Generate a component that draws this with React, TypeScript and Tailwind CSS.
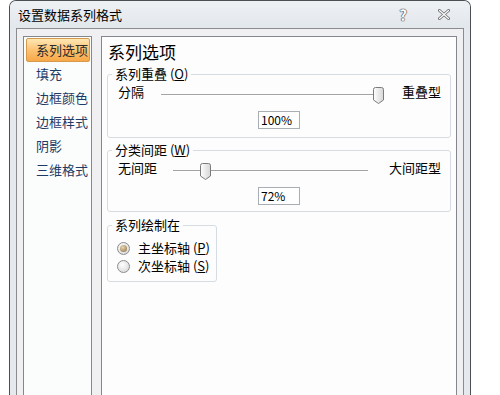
import React from "react";

const font = { fontFamily: '"Noto Sans CJK SC", "Liberation Sans", sans-serif' };

const menuItems = ["系列选项", "填充", "边框颜色", "边框样式", "阴影", "三维格式"];

function Thumb() {
  return (
    <svg width="11" height="17" viewBox="0 0 11 17">
      <defs>
        <linearGradient id="thumbFill" x1="0" y1="0" x2="1" y2="0">
          <stop offset="0" stopColor="#ffffff" />
          <stop offset="1" stopColor="#d6d6d6" />
        </linearGradient>
      </defs>
      <path
        d="M0.5 2.5 Q0.5 0.5 2.5 0.5 H8.5 Q10.5 0.5 10.5 2.5 V13 L5.5 16.5 L0.5 13 Z"
        fill="url(#thumbFill)"
        stroke="#7b7b7b"
      />
    </svg>
  );
}

function Slider({ width, thumbLeft }: { width: number; thumbLeft: number }) {
  return (
    <div className="relative mt-[3px] h-[17px] shrink-0" style={{ width }}>
      <div className="absolute left-0 right-[4px] top-[7px] h-[2px] border-t border-[#a3a3a3] border-b border-b-white" />
      <div className="absolute top-0" style={{ left: thumbLeft }}>
        <Thumb />
      </div>
    </div>
  );
}

function Radio({ checked }: { checked?: boolean }) {
  return (
    <span className="flex h-[13px] w-[13px] items-center justify-center rounded-full border border-[#8c8c8c] bg-[radial-gradient(circle_at_40%_35%,#ffffff,#d2d2d2)]">
      {checked && (
        <span className="h-[7px] w-[7px] rounded-full bg-[radial-gradient(circle_at_40%_35%,#e8d8b4,#8a6a3c)]" />
      )}
    </span>
  );
}

function Group({ title, className, children }: { title: React.ReactNode; className?: string; children: React.ReactNode }) {
  return (
    <fieldset className={`rounded-[3px] border border-[#d5dde3] px-0 ${className ?? ""}`}>
      <legend className="ml-[4px] px-[3px] text-[13px] leading-[16px] text-black">{title}</legend>
      {children}
    </fieldset>
  );
}

export default function App() {
  return (
    <div className="h-[395px] w-[500px] overflow-hidden bg-white" style={font}>
      <div className="ml-[9px] flex h-[400px] w-[462px] flex-col rounded-t-[7px] border border-b-0 border-[#4b4f54] bg-[#e5e9ed]">
        {/* title bar */}
        <div className="flex h-[27px] shrink-0 items-center rounded-t-[6px] bg-gradient-to-b from-[#eef1f4] to-[#e2e7ec] pl-[8px]">
          <span className="text-[13px] text-black">设置数据系列格式</span>
          <span className="ml-auto w-[14px] text-center text-[15px] font-bold leading-none text-white [text-shadow:0_0_1px_#333,0_0_1px_#333,0_0_1px_#333]">
            ?
          </span>
          <svg className="ml-[28px] mr-[20px]" width="12" height="11" viewBox="0 0 12 11">
            <path d="M1.5 1.5 L10.5 9.5 M10.5 1.5 L1.5 9.5" stroke="#6d6d6d" strokeWidth="3" strokeLinecap="round" />
            <path d="M1.5 1.5 L10.5 9.5 M10.5 1.5 L1.5 9.5" stroke="#ffffff" strokeWidth="1.2" strokeLinecap="round" />
          </svg>
        </div>

        {/* body */}
        <div className="mx-[6px] flex flex-1 gap-[9px] border border-b-0 border-[#8c8c8c] bg-[#f0f0f3] pl-[6px] pt-[7px]">
          {/* left menu */}
          <div className="w-[69px] shrink-0 border border-[#84888e] bg-[#fbfdfd] pl-[2px] pr-[1px] pt-[1px]">
            {menuItems.map((item, i) => (
              <div
                key={item}
                className={`flex h-[24px] items-center pl-[9px] text-[13px] ${
                  i === 0
                    ? "rounded-[2px] border border-[#d69a4c] bg-gradient-to-b from-[#ffe7b3] via-[#fcc272] to-[#f7a847] text-[#2b2b2b]"
                    : "border border-transparent text-[#1e3a66]"
                }`}
              >
                {item}
              </div>
            ))}
          </div>

          {/* right panel */}
          <div className="w-[356px] shrink-0 border border-[#84888e] bg-[#fdfdfd] px-[5px]">
            <div className="mt-[4px] pl-[1px] text-[17px] leading-[22px] text-black">系列选项</div>

            <Group
              className="mt-[3px] pb-[8px]"
              title={
                <>
                  系列重叠 (<u>O</u>)
                </>
              }
            >
              <div className="mt-[2px] flex h-[16px] items-start pl-[10px] pr-[9px] text-[13px] leading-[16px] text-black">
                <span className="w-[43px] shrink-0">分隔</span>
                <Slider width={223} thumbLeft={212} />
                <span className="ml-auto">重叠型</span>
              </div>
              <div className="mt-[11px] flex justify-center">
                <div className="flex h-[18px] w-[42px] items-center border border-[#a9aeb5] bg-white pl-[2px] text-[12px] text-black">
                  100%
                </div>
              </div>
            </Group>

            <Group
              className="mt-[4px] pb-[6px]"
              title={
                <>
                  分类间距 (<u>W</u>)
                </>
              }
            >
              <div className="mt-[2px] flex h-[16px] items-start pl-[10px] pr-[9px] text-[13px] leading-[16px] text-black">
                <span className="w-[55px] shrink-0">无间距</span>
                <Slider width={199} thumbLeft={27} />
                <span className="ml-auto">大间距型</span>
              </div>
              <div className="mt-[11px] flex justify-center">
                <div className="flex h-[18px] w-[42px] items-center border border-[#a9aeb5] bg-white pl-[2px] text-[12px] text-black">
                  72%
                </div>
              </div>
            </Group>

            <Group className="mt-[5px] w-[110px] pb-[6px]" title="系列绘制在">
              <div className="mt-[6px] flex flex-col pl-[9px] text-[13px] text-black">
                <label className="flex h-[18px] items-center gap-[8px]">
                  <Radio checked />
                  <span>
                    主坐标轴 (<u>P</u>)
                  </span>
                </label>
                <label className="flex h-[18px] items-center gap-[8px]">
                  <Radio />
                  <span>
                    次坐标轴 (<u>S</u>)
                  </span>
                </label>
              </div>
            </Group>
          </div>
        </div>
      </div>
    </div>
  );
}
